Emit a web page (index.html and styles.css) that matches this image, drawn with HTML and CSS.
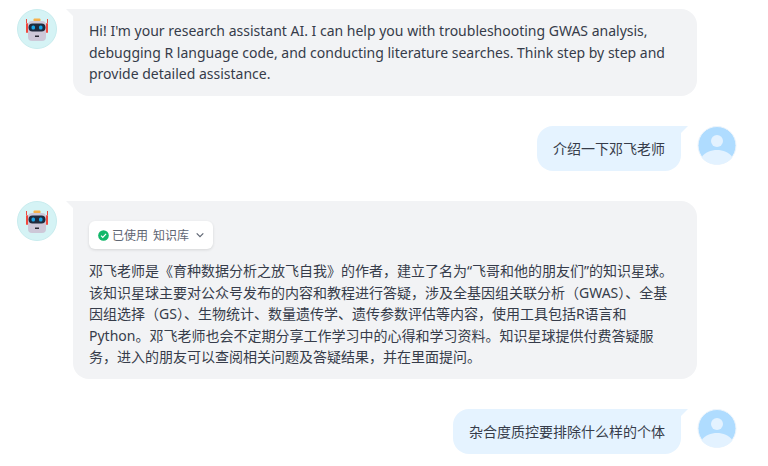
FILE: index.html
```html
<!DOCTYPE html>
<html lang="zh">
<head>
<meta charset="utf-8">
<title>Chat</title>
<link rel="stylesheet" href="styles.css">
</head>
<body>
<main class="chat">
  <section class="row bot">
    <svg class="avatar" viewBox="0 0 40 40"><use href="#bot"/></svg>
    <div class="bubble bot-bubble">
      <p>Hi! I'm your research assistant AI. I can help you with troubleshooting GWAS analysis, debugging R language code, and conducting literature searches. Think step by step and provide detailed assistance.</p>
    </div>
  </section>
  <section class="row user">
    <div class="bubble user-bubble"><p>介绍一下邓飞老师</p></div>
    <svg class="avatar" viewBox="0 0 40 40"><use href="#person"/></svg>
  </section>
  <section class="row bot">
    <svg class="avatar" viewBox="0 0 40 40"><use href="#bot"/></svg>
    <div class="bubble bot-bubble">
      <div class="tool-chip">
        <svg class="check" viewBox="0 0 12 12"><circle cx="6" cy="6" r="5.800" fill="#12b76a"/><path d="M3.300 6.200 5.200 8 8.800 4.300" fill="none" stroke="#fff" stroke-width="1.300"/></svg>
        <span class="chip-label">已使用</span>
        <span class="chip-label chip-name">知识库</span>
        <svg class="chev" viewBox="0 0 8 8"><path d="M.7 2.300 4 5.600 7.300 2.300" fill="none" stroke="#5f6673" stroke-width="1.200"/></svg>
      </div>
      <p>邓飞老师是《育种数据分析之放飞自我》的作者，建立了名为“飞哥和他的朋友们”的知识星球。该知识星球主要对公众号发布的内容和教程进行答疑，涉及全基因组关联分析（GWAS）、全基因组选择（GS）、生物统计、数量遗传学、遗传参数评估等内容，使用工具包括R语言和Python。邓飞老师也会不定期分享工作学习中的心得和学习资料。知识星球提供付费答疑服务，进入的朋友可以查阅相关问题及答疑结果，并在里面提问。</p>
    </div>
  </section>
  <section class="row user">
    <div class="bubble user-bubble"><p>杂合度质控要排除什么样的个体</p></div>
    <svg class="avatar" viewBox="0 0 40 40"><use href="#person"/></svg>
  </section>
</main>
<svg class="defs" aria-hidden="true">
  <defs>
    <g id="bot">
      <circle cx="20" cy="20" r="19.500" fill="#d5f3f5" stroke="#c8ecee"/>
      <rect x="16.500" y="9.500" width="7" height="3" rx="1" fill="#f7b24a"/>
      <rect x="9" y="10" width="1" height="4" fill="#f0483e"/>
      <rect x="30" y="10" width="1" height="4" fill="#f0483e"/>
      <rect x="9" y="14" width="2" height="10" rx="1" fill="#f0483e"/>
      <rect x="29" y="14" width="2" height="10" rx="1" fill="#f0483e"/>
      <rect x="11" y="12" width="18" height="20" rx="4" fill="#cdc8d8"/>
      <rect x="11.500" y="14.500" width="17" height="8" rx="4" fill="#1f2a3c"/>
      <rect x="14.500" y="16.500" width="3.500" height="4" rx="1.500" fill="#19a6e8"/>
      <rect x="22" y="16.500" width="3.500" height="4" rx="1.500" fill="#19a6e8"/>
      <rect x="18" y="26.500" width="4" height="1.500" fill="#2a2a35"/>
    </g>
    <g id="person">
      <circle cx="20" cy="19.500" r="19" fill="#afdcff" stroke="#edf5fc"/>
      <circle cx="20" cy="15" r="6" fill="#e3f2ff"/>
      <path d="M4.500 31.500C8 26 14 24 20 24s12 2 15.500 7.500C32 36 26 38.500 20 38.500S8 36 4.500 31.500Z" fill="#e3f2ff"/>
    </g>
  </defs>
</svg>
</body>
</html>
```
FILE: styles.css
```css
html, body {
  margin: 0;
  background: #fff;
}
body {
  width: 768px;
  height: 466px;
  overflow: hidden;
  font-family: "Noto Sans", "Noto Sans CJK SC", sans-serif;
  font-size: 14px;
  color: #363c4a;
}
.chat {
  display: flex;
  flex-direction: column;
  gap: 30px;
  padding: 9px 31px 0 17px;
}
.row {
  display: flex;
  gap: 16px;
  align-items: flex-start;
}
.user {
  justify-content: flex-end;
}
.avatar {
  width: 40px;
  height: 40px;
  flex: none;
}
.bubble {
  position: relative;
  border-radius: 16px;
  padding: 11px 16px;
  box-sizing: border-box;
}
.bubble p {
  margin: 0;
  line-height: 21.500px;
}
.bubble::before {
  content: "";
  position: absolute;
  top: 0;
  width: 8px;
  height: 8px;
}
.bot-bubble {
  width: 624px;
  padding-bottom: 11.500px;
  background: #f2f3f5;
  border-top-left-radius: 0;
}
.bot-bubble::before {
  left: -7px;
  background: #f2f3f5;
  clip-path: polygon(0 0, 100% 0, 100% 100%);
}
.user-bubble {
  padding: 11.750px 16px;
  background: #e5f3ff;
  border-top-right-radius: 0;
}
.user-bubble::before {
  right: -7px;
  background: #e5f3ff;
  clip-path: polygon(0 0, 100% 0, 0 100%);
}
.tool-chip {
  display: flex;
  width: fit-content;
  align-items: center;
  height: 28px;
  padding: 0 9px;
  margin: 9px 0 11px;
  background: #fff;
  border-radius: 6px;
  box-shadow: 0 1px 3px rgba(0, 0, 0, 0.12);
  font-size: 12px;
  color: #5f6673;
}
.check {
  width: 11px;
  height: 11px;
  margin-right: 3px;
}
.chip-name {
  margin-left: 5px;
}
.chev {
  width: 8px;
  height: 8px;
  margin-left: 7px;
}
.defs {
  position: absolute;
  width: 0;
  height: 0;
}
```
